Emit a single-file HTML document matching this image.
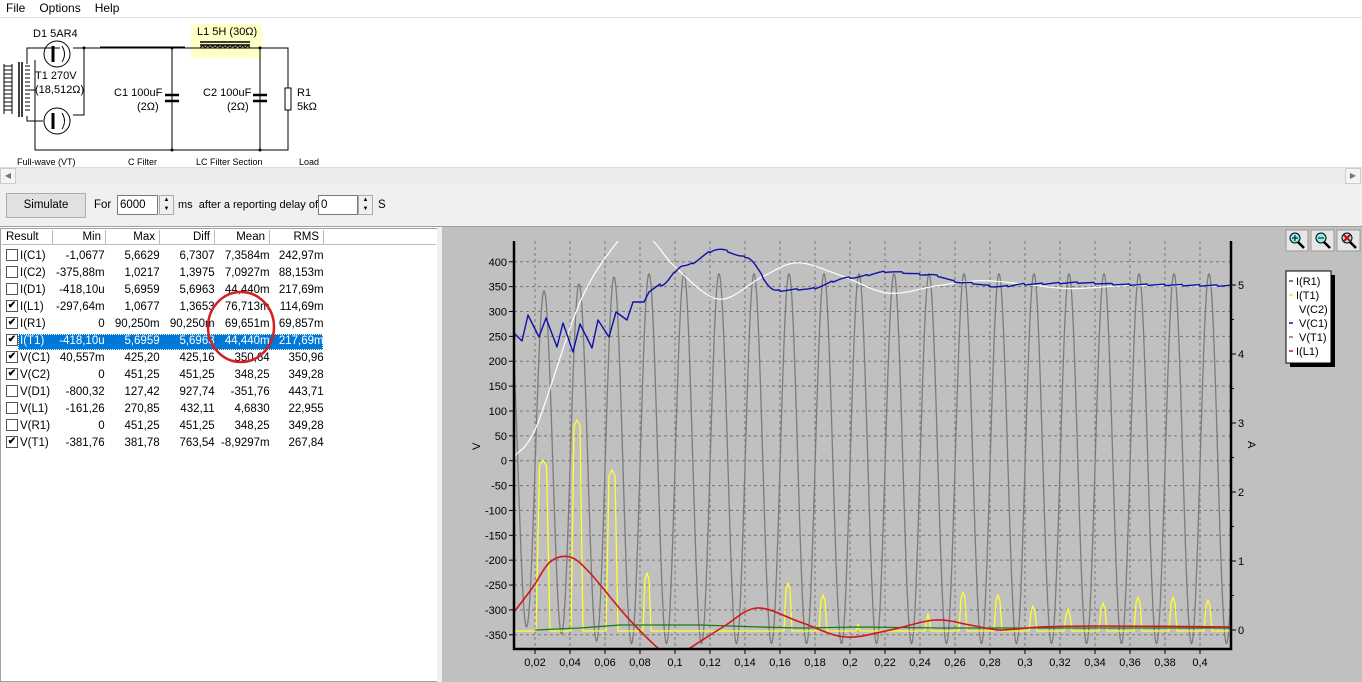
<!DOCTYPE html>
<html><head><meta charset="utf-8">
<style>
*{margin:0;padding:0;box-sizing:border-box}
body{width:1362px;height:682px;overflow:hidden;background:#fff;font-family:"Liberation Sans",sans-serif;font-size:11.5px;color:#000;position:relative}
.a{position:absolute;white-space:nowrap}
.menu span{margin-right:14px}
table{border-collapse:collapse}
td{height:17px;line-height:17px;padding:0 3px;text-align:right;font-size:11.5px;vertical-align:middle}
.cb{display:inline-block;width:12px;height:12px;border:1px solid #555;background:#fff;vertical-align:middle;margin:-2px 2px 0 0;font-size:10px;line-height:10px;text-align:center;font-weight:bold}
.hd{position:absolute;top:230px;height:15px;border-right:1px solid #bbb;border-bottom:1px solid #bbb;background:#fff;font-size:11.5px;text-align:right;padding-right:4px;line-height:14px}
</style></head><body>
<div class="a menu" style="left:6px;top:1px;font-size:12px"><span>File</span><span>Options</span><span>Help</span></div>
<div class="a" style="left:0;top:17px;width:1362px;height:1px;background:#e0e0e0"></div>

<svg class="a" style="left:0;top:0" width="340" height="168" font-family="Liberation Sans" font-size="11">
<rect x="191" y="24" width="71" height="34" fill="#ffffc8"/>
<text x="33" y="37">D1 5AR4</text>
<text x="197" y="35">L1 5H (30Ω)</text>
<text x="35" y="79">T1 270V</text>
<text x="35" y="93">(18,512Ω)</text>
<text x="114" y="96">C1 100uF</text><text x="137" y="110">(2Ω)</text>
<text x="203" y="96">C2 100uF</text><text x="227" y="110">(2Ω)</text>
<text x="297" y="96">R1</text><text x="297" y="110">5kΩ</text>
<g font-size="9"><text x="17" y="165">Full-wave (VT)</text><text x="128" y="165">C Filter</text><text x="196" y="165">LC Filter Section</text><text x="299" y="165">Load</text></g>
<g stroke="#000" fill="none" stroke-width="1">
<path d="M73 48H288V150H35V60M60 48H43"/>
<path d="M100 47.5H185" stroke-width="2"/>
<path d="M84 48V115H73M172 48V150M260 48V150"/>
<path d="M165 95h14M165 101h14M253 95h14M253 101h14" stroke-width="2.5"/>
<rect x="285" y="88" width="6" height="22" fill="#fff"/>
<path d="M200 42h50M200 45h50" stroke-width="1.5"/>
<path d="M200 48q3 -4 5 0q3 -4 5 0q3 -4 5 0q3 -4 5 0q3 -4 5 0q3 -4 5 0q3 -4 5 0q3 -4 5 0q3 -4 5 0q3 -4 5 0"/>
<circle cx="57" cy="54" r="13"/><circle cx="57" cy="121" r="13"/>
<path d="M53 46v16M53 113v16" stroke-width="3"/><path d="M62 46q5 8 0 16M62 113q5 8 0 16"/>
<path d="M4 66h8M4 70h8M4 74h8M4 78h8M4 82h8M4 86h8M4 90h8M4 94h8M4 98h8M4 102h8M4 106h8M4 110h8"/>
<path d="M4 64v50M12 64v50"/>
<path d="M19 62v55M22 62v55" stroke-width="1.5"/>
<path d="M25 66h5M25 70h5M25 74h5M25 78h5M25 82h5M25 86h5M25 90h5M25 94h5M25 98h5M25 102h5M25 106h5M25 110h5"/>
<path d="M27 64V48H43M27 116V121H43M35 150V90H28"/>
</g>
<g fill="#000"><circle cx="84" cy="48" r="1.5"/><circle cx="172" cy="48" r="1.5"/><circle cx="172" cy="150" r="1.5"/><circle cx="260" cy="48" r="1.5"/><circle cx="260" cy="150" r="1.5"/></g>
</svg>

<div class="a" style="left:0;top:167px;width:1362px;height:17px;background:#ececec;border-top:1px solid #ddd"></div>
<div class="a" style="left:0;top:168px;width:16px;height:16px;background:#f4f4f4;border:1px solid #ccc;font-size:8px;line-height:14px;text-align:center;color:#777">◀</div>
<div class="a" style="left:1345px;top:168px;width:16px;height:16px;background:#f4f4f4;border:1px solid #ccc;font-size:8px;line-height:14px;text-align:center;color:#777">▶</div>
<div class="a" style="left:0;top:184px;width:1362px;height:43px;background:#f0f0f0;border-bottom:1px solid #a0a0a0"></div>
<div class="a" style="left:6px;top:193px;width:80px;height:25px;background:#e1e1e1;border:1px solid #adadad;text-align:center;line-height:22px">Simulate</div>
<div class="a" style="left:94px;top:199px">For</div>
<div class="a" style="left:117px;top:195px;width:41px;height:20px;background:#fff;border:1px solid #7a7a7a;padding-left:2px;line-height:18px">6000</div>
<div class="a" style="left:159px;top:195px;width:15px;height:20px;background:#f0f0f0;border:1px solid #aaa;font-size:6px;line-height:9px;text-align:center">▲<br>▼</div>
<div class="a" style="left:178px;top:199px;font-size:11px">ms&nbsp;&nbsp;after a reporting delay of</div>
<div class="a" style="left:318px;top:195px;width:40px;height:20px;background:#fff;border:1px solid #7a7a7a;padding-left:2px;line-height:18px">0</div>
<div class="a" style="left:358px;top:195px;width:15px;height:20px;background:#f0f0f0;border:1px solid #aaa;font-size:6px;line-height:9px;text-align:center">▲<br>▼</div>
<div class="a" style="left:378px;top:199px">S</div>

<div class="a" style="left:0;top:228px;width:438px;height:454px;background:#fff;border:1px solid #a0a0a0"></div>
<div class="a" style="left:437px;top:227px;width:5px;height:455px;background:#f0f0f0"></div>
<div class="hd" style="left:2px;width:51px;text-align:left;padding-left:4px">Result</div>
<div class="hd" style="left:53px;width:53px">Min</div>
<div class="hd" style="left:106px;width:54px">Max</div>
<div class="hd" style="left:160px;width:55px">Diff</div>
<div class="hd" style="left:215px;width:55px">Mean</div>
<div class="hd" style="left:270px;width:54px">RMS</div>
<div class="hd" style="left:324px;width:112px;border-right:none"></div>
<div class="a" style="left:18px;top:334px;width:305px;height:16px;background:#0078d7"></div>
<div class="a" style="left:18px;top:334px;width:305px;height:16px;border:1px dotted #fff"></div>
<table class="a" style="left:3px;top:248px">
<colgroup><col style="width:50px"><col style="width:53px"><col style="width:55px"><col style="width:55px"><col style="width:55px"><col style="width:54px"></colgroup>
<tr><td style="text-align:left"><span class="cb"></span>I(C1)</td><td>-1,0677</td><td>5,6629</td><td>6,7307</td><td>7,3584m</td><td>242,97m</td></tr>
<tr><td style="text-align:left"><span class="cb"></span>I(C2)</td><td>-375,88m</td><td>1,0217</td><td>1,3975</td><td>7,0927m</td><td>88,153m</td></tr>
<tr><td style="text-align:left"><span class="cb"></span>I(D1)</td><td>-418,10u</td><td>5,6959</td><td>5,6963</td><td>44,440m</td><td>217,69m</td></tr>
<tr><td style="text-align:left"><span class="cb">✔</span>I(L1)</td><td>-297,64m</td><td>1,0677</td><td>1,3653</td><td>76,713m</td><td>114,69m</td></tr>
<tr><td style="text-align:left"><span class="cb">✔</span>I(R1)</td><td>0</td><td>90,250m</td><td>90,250m</td><td>69,651m</td><td>69,857m</td></tr>
<tr style="color:#fff"><td style="text-align:left"><span class="cb" style="color:#000">✔</span>I(T1)</td><td>-418,10u</td><td>5,6959</td><td>5,6963</td><td>44,440m</td><td>217,69m</td></tr>
<tr><td style="text-align:left"><span class="cb">✔</span>V(C1)</td><td>40,557m</td><td>425,20</td><td>425,16</td><td>350,64</td><td>350,96</td></tr>
<tr><td style="text-align:left"><span class="cb">✔</span>V(C2)</td><td>0</td><td>451,25</td><td>451,25</td><td>348,25</td><td>349,28</td></tr>
<tr><td style="text-align:left"><span class="cb"></span>V(D1)</td><td>-800,32</td><td>127,42</td><td>927,74</td><td>-351,76</td><td>443,71</td></tr>
<tr><td style="text-align:left"><span class="cb"></span>V(L1)</td><td>-161,26</td><td>270,85</td><td>432,11</td><td>4,6830</td><td>22,955</td></tr>
<tr><td style="text-align:left"><span class="cb"></span>V(R1)</td><td>0</td><td>451,25</td><td>451,25</td><td>348,25</td><td>349,28</td></tr>
<tr><td style="text-align:left"><span class="cb">✔</span>V(T1)</td><td>-381,76</td><td>381,78</td><td>763,54</td><td>-8,9297m</td><td>267,84</td></tr>
</table>
<svg class="a" style="left:0;top:0" width="440" height="682"><ellipse cx="241" cy="327" rx="33" ry="35" fill="none" stroke="#d42020" stroke-width="2.5"/></svg>

<div class="a" style="left:442px;top:227px;width:920px;height:455px;background:#c0c0c0"></div>
<svg id="ch" class="a" style="left:0;top:0" width="1362" height="682" font-family="Liberation Sans" font-size="11">
<defs><clipPath id="cp"><rect x="514" y="241" width="717" height="408"/></clipPath></defs>
<g id="grid" stroke="#777" stroke-dasharray="3 3" stroke-width="1"></g>
<g id="labels" fill="#000"></g>
<g clip-path="url(#cp)" fill="none" stroke-linejoin="round">
<path id="gray" stroke="#7c7c7c" stroke-width="1.3"/>
<path id="white" stroke="#fff" stroke-width="1.2"/>
<path id="yellow" stroke="#ffff30" stroke-width="1.3"/>
<path id="green" stroke="#1a7a1a" stroke-width="1.3"/>
<path id="blue" stroke="#1010a8" stroke-width="1.4"/>
<path id="red" stroke="#d01818" stroke-width="1.6"/>
</g>
<path d="M514 241V649H1231V241" fill="none" stroke="#000" stroke-width="2.5"/>
<text x="471" y="449" transform="rotate(-90 476 445)">V</text>
<text x="1248" y="449" transform="rotate(90 1252 445)">A</text>
<g>
<rect x="1286" y="230" width="22" height="21" fill="#e6e6e6" stroke="#999"/>
<rect x="1311" y="230" width="23" height="21" fill="#e6e6e6" stroke="#999"/>
<rect x="1337" y="230" width="23" height="21" fill="#e6e6e6" stroke="#999"/>
<g fill="#8ee" stroke="#000"><circle cx="1295" cy="238" r="5"/><circle cx="1321" cy="238" r="5"/><circle cx="1347" cy="238" r="5"/></g>
<path d="M1298 242l6 6M1324 242l6 6M1350 242l6 6" stroke="#000" stroke-width="2.5"/>
<path d="M1292 238h6M1295 235v6" stroke="#000"/>
<path d="M1318 238h6" stroke="#000"/>
<path d="M1344 235l6 6M1350 235l-6 6" stroke="#d00" stroke-width="2"/>
</g>
<rect x="1290" y="275" width="45" height="92" fill="#000"/>
<rect x="1286" y="271" width="45" height="92" fill="#fff" stroke="#000"/>
<g font-size="11"><text x="1296" y="285">I(R1)</text><text x="1296" y="299">I(T1)</text><text x="1299" y="313">V(C2)</text><text x="1299" y="327">V(C1)</text><text x="1299" y="341">V(T1)</text><text x="1296" y="355">I(L1)</text></g>
<g stroke-width="1.5"><path d="M1289 281h4" stroke="#1a7a1a"/><path d="M1289 295h4" stroke="#ee0"/><path d="M1289 323h4" stroke="#1010a8"/><path d="M1289 337h4" stroke="#777"/><path d="M1289 351h4" stroke="#d01818"/></g>
</svg>
<script>
const NS="http://www.w3.org/2000/svg";
const X=t=>500+1750*t, YL=v=>460.7-0.4973*v, YR=a=>630-69*a;
const grid=document.getElementById('grid'),lab=document.getElementById('labels');
function el(p,tag,at,txt){const e=document.createElementNS(NS,tag);for(const k in at)e.setAttribute(k,at[k]);if(txt!==undefined)e.textContent=txt;p.appendChild(e);return e;}
for(let v=400;v>=-350;v-=50){const y=YL(v);el(grid,'line',{x1:514,x2:1231,y1:y,y2:y});el(lab,'text',{x:507,y:y+4,'text-anchor':'end'},v);el(lab,'line',{x1:509,x2:514,y1:y,y2:y,stroke:'#000'});}
for(let k=1;k<=20;k++){const x=535+35*(k-1);if(x>1230)break;el(grid,'line',{x1:x,x2:x,y1:241,y2:649});const t=(k*0.02).toFixed(2).replace(/0$/,'').replace('.',',');el(lab,'text',{x:x,y:666,'text-anchor':'middle'},t);el(lab,'line',{x1:x,x2:x,y1:649,y2:654,stroke:'#000'});}
for(let a=0;a<=5;a++){const y=YR(a);el(lab,'text',{x:1238,y:y+4},a);el(lab,'line',{x1:1231,x2:1236,y1:y,y2:y,stroke:'#000'});}
for(let a=0.5;a<5.5;a+=1){const y=YR(a);el(lab,'line',{x1:1231,x2:1234,y1:y,y2:y,stroke:'#000'});}
let d='';for(let x=514;x<=1232;x+=0.5){const t=(x-500)/1750;const A=t<0.07?330+ (t-0.0086)*700:372;const v=A*Math.sin(2*Math.PI*50*(t-0.02014))+(t<0.07?0:4);d+=(d?'L':'M')+x.toFixed(1)+' '+YL(v).toFixed(1);}
document.getElementById('gray').setAttribute('d',d);
function cr(pts){let s='M'+pts[0][0]+' '+pts[0][1];for(let i=0;i<pts.length-1;i++){const p0=pts[i-1]||pts[i],p1=pts[i],p2=pts[i+1],p3=pts[i+2]||p2;s+=`C${(p1[0]+(p2[0]-p0[0])/6).toFixed(1)} ${(p1[1]+(p2[1]-p0[1])/6).toFixed(1)} ${(p2[0]-(p3[0]-p1[0])/6).toFixed(1)} ${(p2[1]-(p3[1]-p1[1])/6).toFixed(1)} ${p2[0]} ${p2[1]}`;}return s;}
const tv=a=>a.map(([t,v])=>[+X(t).toFixed(1),+YL(v).toFixed(1)]);
document.getElementById('white').setAttribute('d',cr(tv([[0.0086,10],[0.0211,71],[0.0457,319],[0.067,440],[0.077,462],[0.088,440],[0.1,390],[0.125,325],[0.15,370],[0.17,398],[0.195,372],[0.222,337],[0.25,352],[0.275,362],[0.3,355],[0.326,346],[0.36,352],[0.42,351]])));
let bp=[[514,333],[522,341],[528,315],[539,337],[546,318],[557,347],[563,323],[573,352],[580,324],[592,348],[598,320],[609,337],[616,312],[627,320],[633,302],[644,302],[649,292],[660,284]];
let bd='M'+bp.map(p=>p.join(' ')).join('L');
const key=[[0.0914,352],[0.105,392],[0.125,425],[0.14,410],[0.158,342],[0.175,345],[0.2,368],[0.222,380],[0.245,374],[0.265,358],[0.285,350],[0.3,355],[0.33,358],[0.36,354],[0.42,352]];
function interp(t){for(let i=0;i<key.length-1;i++){if(t<=key[i+1][0]){const u=(t-key[i][0])/(key[i+1][0]-key[i][0]);const s=(1-Math.cos(Math.PI*u))/2;return key[i][1]+(key[i+1][1]-key[i][1])*s;}}return 352;}
for(let x=661;x<=1232;x+=1){const t=(x-500)/1750;const r=3*(((t*100)%1)-0.5);bd+='L'+x+' '+YL(interp(t)+r).toFixed(1);}
document.getElementById('blue').setAttribute('d',bd);
document.getElementById('red').setAttribute('d',cr([[514,612],[533,587],[550,562],[570,557],[590,573],[627,617],[660,650],[673,658],[687,650],[723,627],[757,608],[800,622],[845,637],[890,630],[935,620],[970,625],[1000,630],[1040,627],[1100,626],[1232,627]]));
document.getElementById('green').setAttribute('d','M535 630L580 628L620 625L700 625L760 627L800 628L860 627L940 628L1232 628');
const sp=[[543,460,7],[577,420,6],[612,470,6],[647,573,4],[788,583,4],[823,595,4],[858,624,3],[928,614,3],[963,592,4],[998,595,4],[1033,606,4],[1068,609,4],[1103,603,4],[1138,597,4],[1173,597,4],[1208,600,4]];
let yd='M514 631';for(const [x,top,w] of sp){yd+=`L${x-w} 631L${x-w/2} ${top+6}L${x} ${top}L${x+w/2} ${top+6}L${x+w} 631`;}yd+='L1232 631';
document.getElementById('yellow').setAttribute('d',yd);
</script>
</body></html>
